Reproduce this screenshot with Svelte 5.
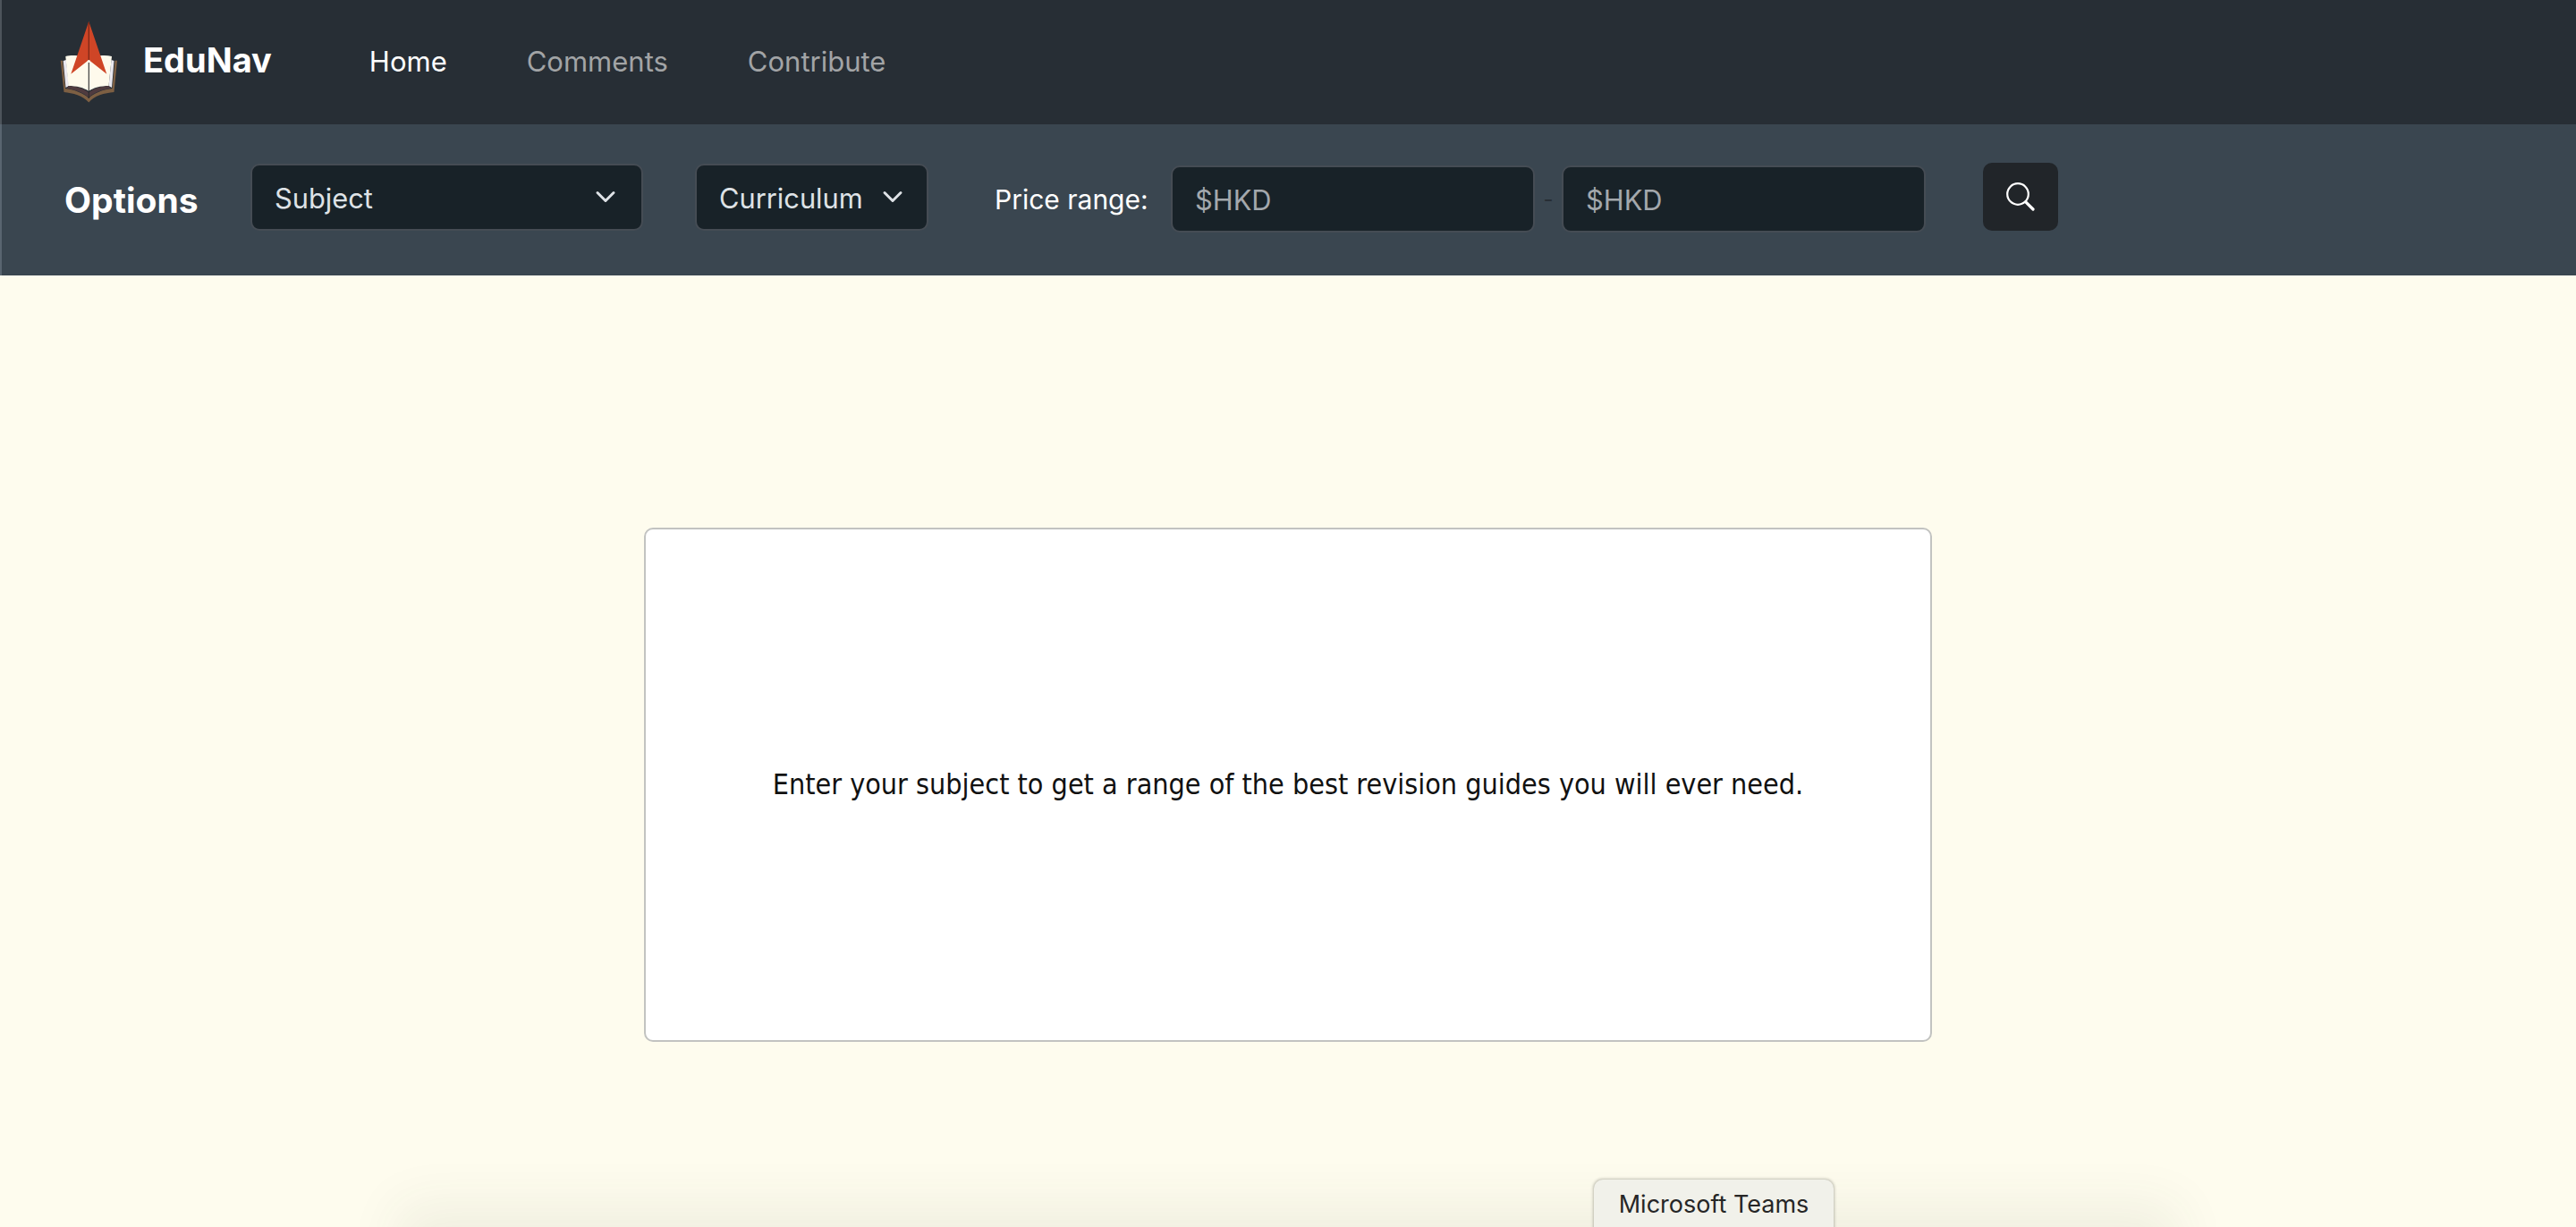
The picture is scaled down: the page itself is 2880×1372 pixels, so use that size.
<script lang="ts">
  const links = [
    { label: 'Home', active: true },
    { label: 'Comments', active: false },
    { label: 'Contribute', active: false }
  ];
</script>

<div class="page">
  <nav class="navbar">
    <svg class="logo" viewBox="0 0 66 92" aria-label="EduNav logo">
      <path d="M0.7 43.7 L3 43.7 L6 75 C15 76 27 80 32.3 86 C37 80 49 76 58.5 75 L61.5 43.7 L64 43.7 L60.5 79 C50 80 38 83 32.3 90.5 C26 83 14 80 4.5 79Z" fill="#7d5f43" />
      <path d="M3.7 44 L7 43 L10 72 L6.5 74Z M60.5 44 L57.5 43 L54.5 72 L58 74Z" fill="#e9e7ee" />
      <path d="M9.5 72 C17 72 28 75 32.3 80 C36 75 47 72 54.5 72 L56.5 75 C47 76 37 80 32.3 85 C27 80 17 76 7.5 75Z" fill="#4f3b3f" />
      <path d="M6.3 39 C14 37 26 38 32.3 43 C38 38 50 37 58 39 L54.5 72 C46 72 37 74 32.3 78 C27 74 18 72 9.5 72Z" fill="#fefaec" />
      <path d="M32.3 43 V86" stroke="#2a2a2c" stroke-width="1.1" fill="none" />
      <path d="M32.3 0 L52.3 58.7 L32.3 43 L12.3 58.7Z" fill="#cf4526" />
      <path d="M32.3 1 V43" stroke="#7d2a18" stroke-width="1.3" fill="none" />
      <circle cx="32.3" cy="44.5" r="1.6" fill="#fefaec" />
    </svg>
    <span class="brand">EduNav</span>
    <ul class="nav-links">
      {#each links as link}
        <li class:active={link.active}>{link.label}</li>
      {/each}
    </ul>
  </nav>

  <section class="options">
    <h2>Options</h2>
    <div class="select subject">
      <span>Subject</span>
      <svg viewBox="0 0 16 16"><path d="M2 5 L8 11 L14 5" /></svg>
    </div>
    <div class="select curriculum">
      <span>Curriculum</span>
      <svg viewBox="0 0 16 16"><path d="M2 5 L8 11 L14 5" /></svg>
    </div>
    <label class="price-label" for="price-min">Price range:</label>
    <input id="price-min" class="price" placeholder="$HKD" />
    <span class="dash">-</span>
    <input class="price" placeholder="$HKD" />
    <button class="search" aria-label="Search">
      <svg viewBox="0 0 16 16">
        <circle cx="6.5" cy="6.5" r="5.9" />
        <path class="handle" d="M10.9 10.9 L15 15" />
      </svg>
    </button>
  </section>

  <main>
    <div class="card">
      <p>Enter your subject to get a range of the best revision guides you will ever need.</p>
    </div>
  </main>

  <div class="dock-shadow"></div>
  <div class="dock-tip">Microsoft Teams</div>
</div>

<style>
  :global(body) {
    margin: 0;
  }

  .page {
    position: relative;
    height: 1372px;
    overflow: hidden;
    display: flex;
    flex-direction: column;
    background: #fefcee;
    font-family: Inter, "Liberation Sans", sans-serif;
  }

  .navbar {
    height: 139px;
    flex-shrink: 0;
    box-sizing: border-box;
    display: flex;
    align-items: center;
    padding: 0 0 2px 67px;
    background: #272e35;
    border-left: 2px solid #4d545b;
  }

  .logo {
    width: 66px;
    height: 92px;
    margin-left: -2px;
    margin-top: 2px;
  }

  .brand {
    margin-left: 27px;
    margin-top: -4px;
    color: #fff;
    font-size: 38px;
    font-weight: 700;
  }

  .nav-links {
    display: flex;
    gap: 89px;
    list-style: none;
    margin: 0 0 0 109px;
    padding: 0;
    color: #a2a4a6;
    font-size: 31px;
  }

  .nav-links .active {
    color: #fff;
  }

  .options {
    height: 169px;
    flex-shrink: 0;
    box-sizing: border-box;
    display: flex;
    align-items: center;
    padding: 0 0 7px 70px;
    background: #3a4650;
    border-left: 2px solid #596570;
    color: #fff;
  }

  h2 {
    margin: 6px 0 0;
    width: 208px;
    font-size: 39px;
    font-weight: 700;
  }

  .select {
    height: 75px;
    box-sizing: border-box;
    display: flex;
    align-items: center;
    justify-content: space-between;
    padding: 2px 28px 0 25px;
    background: #182228;
    border: 2px solid #454c54;
    border-radius: 10px;
    color: #dee2e6;
    font-size: 30.8px;
  }

  .select svg {
    width: 24px;
    height: 24px;
    margin-top: -2px;
    fill: none;
    stroke: #dee2e6;
    stroke-width: 2;
    stroke-linecap: round;
    stroke-linejoin: round;
  }

  .subject {
    width: 439px;
  }

  .curriculum {
    width: 261px;
    margin-left: 58px;
    padding-right: 26px;
  }

  .price-label {
    margin: 6px 0 0 74px;
    width: 197px;
    font-size: 30px;
  }

  .price {
    width: 407px;
    height: 75px;
    margin-top: 4px;
    box-sizing: border-box;
    padding: 3px 25px 0;
    background: #182228;
    border: 2px solid #454c54;
    border-radius: 10px;
    color: #dee2e6;
    font-family: inherit;
    font-size: 30.8px;
  }

  .price::placeholder {
    color: #a3a8ad;
    opacity: 1;
  }

  .dash {
    width: 30px;
    margin-top: 4px;
    text-align: center;
    color: #272e35;
    font-size: 24px;
  }

  .search {
    width: 84px;
    height: 76px;
    margin-left: 64px;
    padding: 0;
    display: flex;
    align-items: center;
    justify-content: center;
    background: #212529;
    border: none;
    border-radius: 10px;
  }

  .search svg {
    width: 32px;
    height: 32px;
    fill: none;
    stroke: #fff;
    stroke-width: 1.1;
  }

  .search .handle {
    stroke-width: 1.6;
    stroke-linecap: round;
  }

  main {
    flex: 1;
    display: flex;
    justify-content: center;
    padding-top: 282px;
  }

  .card {
    width: 1440px;
    height: 575px;
    box-sizing: border-box;
    display: flex;
    align-items: center;
    justify-content: center;
    background: #fff;
    border: 2px solid #c2c3c1;
    border-radius: 10px;
  }

  .card p {
    margin: 0 0 2px;
    color: #111;
    font-family: "DejaVu Sans", sans-serif;
    font-stretch: condensed;
    font-size: 32px;
  }

  .dock-shadow {
    position: absolute;
    left: 470px;
    right: 470px;
    bottom: -50px;
    height: 50px;
    box-shadow: 0 0 60px 25px rgba(60, 70, 50, 0.07);
  }

  .dock-tip {
    position: absolute;
    left: 1782px;
    top: 1319px;
    width: 268px;
    height: 70px;
    box-sizing: border-box;
    padding-top: 11px;
    text-align: center;
    background: #f1f1ea;
    border-radius: 10px;
    box-shadow: 0 0 3px 1px rgba(60, 60, 50, 0.3);
    color: #262626;
    font-size: 27px;
  }
</style>
